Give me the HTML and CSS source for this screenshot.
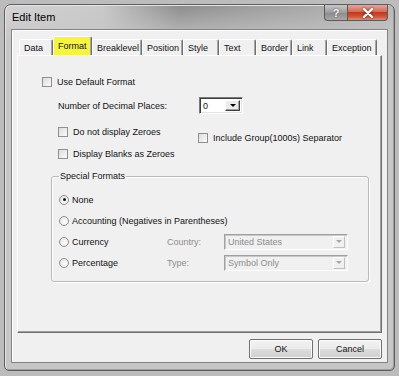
FILE: index.html
```html
<!DOCTYPE html>
<html lang="en">
  <head>
    <meta charset="UTF-8" />
    <meta name="viewport" content="width=device-width, initial-scale=1.0" />
    <title>Edit Item</title>
    <link rel="stylesheet" href="styles.css">
  </head>
  <body>
    <div class="window">
      <div class="titlebar">
        <span class="title">Edit Item</span>
        <div class="captionButtons">
          <span class="capBtn help">?</span>
          <span class="capBtn close">
            <svg width="12" height="10" viewBox="0 0 12 10">
              <path d="M2 1 L10 9 M10 1 L2 9" stroke="#fff" stroke-width="2.4" stroke-linecap="round" />
            </svg>
          </span>
        </div>
      </div>
      <div class="client">
        <div class="tabs">
          <span class="tab">Data</span>
          <span class="tab active">Format</span>
          <span class="tab">Breaklevel</span>
          <span class="tab">Position</span>
          <span class="tab">Style</span>
          <span class="tab">Text</span>
          <span class="tab">Border</span>
          <span class="tab">Link</span>
          <span class="tab">Exception</span>
        </div>
        <div class="panel">
          <label class="check defaultRow"><span class="box"></span>Use Default Format</label>
          <div class="decimalRow">
            <span class="decimalLabel">Number of Decimal Places:</span>
            <span class="combo small">
              <span class="comboValue">0</span>
              <span class="comboDrop"><span class="arrow"></span></span>
            </span>
          </div>
          <div class="options">
            <div class="optionsLeft">
              <label class="check"><span class="box"></span>Do not display Zeroes</label>
              <label class="check"><span class="box"></span>Display Blanks as Zeroes</label>
            </div>
            <label class="check groupSep"><span class="box"></span>Include Group(1000s) Separator</label>
          </div>
          <fieldset class="special">
            <legend>Special Formats</legend>
            <div class="radioGrid">
              <label class="radio"><span class="dot checked"></span>None</label>
              <label class="radio wide"><span class="dot"></span>Accounting (Negatives in Parentheses)</label>
              <label class="radio"><span class="dot"></span>Currency</label>
              <span class="fieldLabel">Country:</span>
              <span class="combo disabled">
                <span class="comboValue">United States</span>
                <span class="comboDrop"><span class="arrow"></span></span>
              </span>
              <label class="radio"><span class="dot"></span>Percentage</label>
              <span class="fieldLabel">Type:</span>
              <span class="combo disabled">
                <span class="comboValue">Symbol Only</span>
                <span class="comboDrop"><span class="arrow"></span></span>
              </span>
            </div>
          </fieldset>
        </div>
        <div class="actions">
          <button class="btn">OK</button>
          <button class="btn">Cancel</button>
        </div>
      </div>
    </div>
  </body>
</html>
```

FILE: styles.css
```css
* {
  box-sizing: border-box;
}
html {
  font-family: "Liberation Sans", Arial, sans-serif;
}
body {
  margin: 0;
  padding: 4px 0 0 4px;
  background: #bcbcbc;
  height: 376px;
  overflow: hidden;
}
.window {
  width: 391px;
  height: 367px;
  border: 1px solid #5f5f5f;
  border-radius: 7px 7px 5px 5px;
  padding: 0 6px 7px 6px;
  background:
    linear-gradient(to bottom, rgba(200, 200, 200, 0) 0, #c6c6c6 40px),
    linear-gradient(to right, #d4d4d4 0, #c9c9c9 25%, #8c8c8c 45%, #9a9a9a 60%, #a9a9a9 80%, #b9b9b9 100%);
  box-shadow: inset 1px 1px 0 #e4e4e4, inset -1px -1px 0 #9c9c9c;
}
.titlebar {
  height: 24px;
  display: flex;
  align-items: center;
}
.title {
  padding-left: 1px;
  font-size: 11px;
  color: #000;
}
.captionButtons {
  margin-left: auto;
  align-self: flex-start;
  display: flex;
}
.capBtn {
  height: 16px;
  display: flex;
  align-items: center;
  justify-content: center;
  border: 1px solid #5a5a5a;
  border-top: none;
}
.help {
  width: 23px;
  border-radius: 0 0 0 4px;
  border-right: none;
  background: linear-gradient(#c7c7c7, #9c9c9c 50%, #8a8a8a 51%, #a8a8a8);
  color: #f4f4f4;
  font-weight: bold;
  font-size: 11px;
  text-shadow: 0 0 2px #444;
}
.close {
  width: 41px;
  border-radius: 0 0 4px 0;
  background: linear-gradient(#e8a598, #d66a55 45%, #c1381f 50%, #d5583c 80%, #e88c6c);
}
.close svg {
  filter: drop-shadow(0 0 1px #6a1a0e);
}
.client {
  height: 334px;
  background: #f0f0f0;
  border: 1px solid #838383;
  box-shadow: inset 1px 1px 0 #fff;
  padding: 6px 5px 0 5px;
  font-size: 9px;
  color: #111;
}
.tabs {
  display: grid;
  grid-template-columns: 34px 39px 50px 41px 36px 37px 36px 35px 50px;
  margin-left: 2px;
  height: 19px;
  align-items: end;
}
.tab {
  height: 16px;
  padding: 3px 0 0 4px;
  border-top: 1px solid #fff;
  border-left: 1px solid #fff;
  border-right: 1px solid #707070;
  box-shadow: inset -1px 0 0 #a6a6a6;
  border-radius: 2px 2px 0 0;
  white-space: nowrap;
}
.tab.active {
  height: 19px;
  padding-top: 4px;
  background: #f6f53c;
  border-color: #fff #707070 #f6f53c #fff;
}
.panel {
  height: 278px;
  border-top: 1px solid #fff;
  border-left: 1px solid #fff;
  border-right: 1px solid #6f6f6f;
  border-bottom: 1px solid #6f6f6f;
  box-shadow: inset -1px -1px 0 #a0a0a0;
  padding: 19px 0 0 0;
}
.check,
.radio {
  display: flex;
  align-items: center;
  height: 14px;
  white-space: nowrap;
}
.box {
  width: 10px;
  height: 10px;
  margin-right: 5px;
  border: 1px solid #8e8f8f;
  background: linear-gradient(135deg, #dcdcdc, #fbfbfb);
}
.dot {
  width: 10px;
  height: 10px;
  margin-right: 3px;
  border-radius: 50%;
  border: 1px solid #8e8f8f;
  background: radial-gradient(circle at 60% 60%, #fff, #dedede);
  display: flex;
  align-items: center;
  justify-content: center;
}
.dot.checked::after {
  content: "";
  width: 3px;
  height: 3px;
  border-radius: 50%;
  background: #111;
}
.defaultRow {
  margin-left: 24px;
}
.decimalRow {
  display: flex;
  align-items: center;
  height: 17px;
  margin: 8px 0 0 40px;
}
.decimalLabel {
  width: 141px;
}
.combo {
  display: flex;
  align-items: center;
  height: 17px;
  border: 1px solid;
  border-color: #7a7a7a #fff #fff #7a7a7a;
  box-shadow: inset 1px 1px 0 #3c3c3c, inset -1px -1px 0 #e3e3e3;
  background: #fff;
  padding: 2px;
}
.combo.small {
  width: 44px;
}
.comboValue {
  flex: 1;
  padding-left: 1px;
}
.comboDrop {
  width: 15px;
  height: 100%;
  display: flex;
  align-items: center;
  justify-content: center;
  background: #ececec;
  border: 1px solid;
  border-color: #fff #404040 #404040 #fff;
  box-shadow: inset -1px -1px 0 #a0a0a0;
}
.arrow {
  width: 0;
  height: 0;
  border-left: 3px solid transparent;
  border-right: 3px solid transparent;
  border-top: 3px solid #000;
}
.combo.disabled {
  width: 124px;
  height: 16px;
  background: #f0f0f0;
  color: #8c8c8c;
  border-color: #a0a0a0 #fff #fff #a0a0a0;
  box-shadow: inset 1px 1px 0 #c8c8c8;
  padding: 1px 2px;
}
.combo.disabled .comboDrop {
  width: 12px;
  border-color: #fff #c0c0c0 #c0c0c0 #fff;
  box-shadow: none;
  background: #f0f0f0;
}
.combo.disabled .arrow {
  border-top-color: #a8a8a8;
}
.options {
  display: flex;
  margin: 11px 0 0 40px;
}
.optionsLeft {
  width: 140px;
  display: flex;
  flex-direction: column;
  gap: 8px;
}
.groupSep {
  margin-top: 6px;
}
.special {
  margin: 9px 0 0 33px;
  width: 318px;
  height: 112px;
  padding: 9px 0 0 7px;
  border: 1px solid #b9b9b9;
  border-radius: 3px;
  box-shadow: 1px 1px 0 #fff, inset 1px 1px 0 #fff;
}
.special legend {
  padding: 0 1px;
  line-height: 12px;
}
.radioGrid {
  display: grid;
  grid-template-columns: 108px 57px 124px;
  grid-auto-rows: 17px;
  row-gap: 4px;
  align-items: center;
}
.radio.wide {
  grid-column: 1 / -1;
}
.fieldLabel {
  color: #8c8c8c;
}
.actions {
  display: flex;
  justify-content: flex-end;
  gap: 5px;
  margin-top: 6px;
}
.btn {
  width: 64px;
  height: 20px;
  font: inherit;
  color: #111;
  border: 1px solid #707070;
  border-radius: 2px;
  background: linear-gradient(#f2f2f2, #ebebeb 50%, #dddddd 51%, #cfcfcf);
  box-shadow: inset 0 0 0 1px #fcfcfc;
  padding: 0;
}
```
